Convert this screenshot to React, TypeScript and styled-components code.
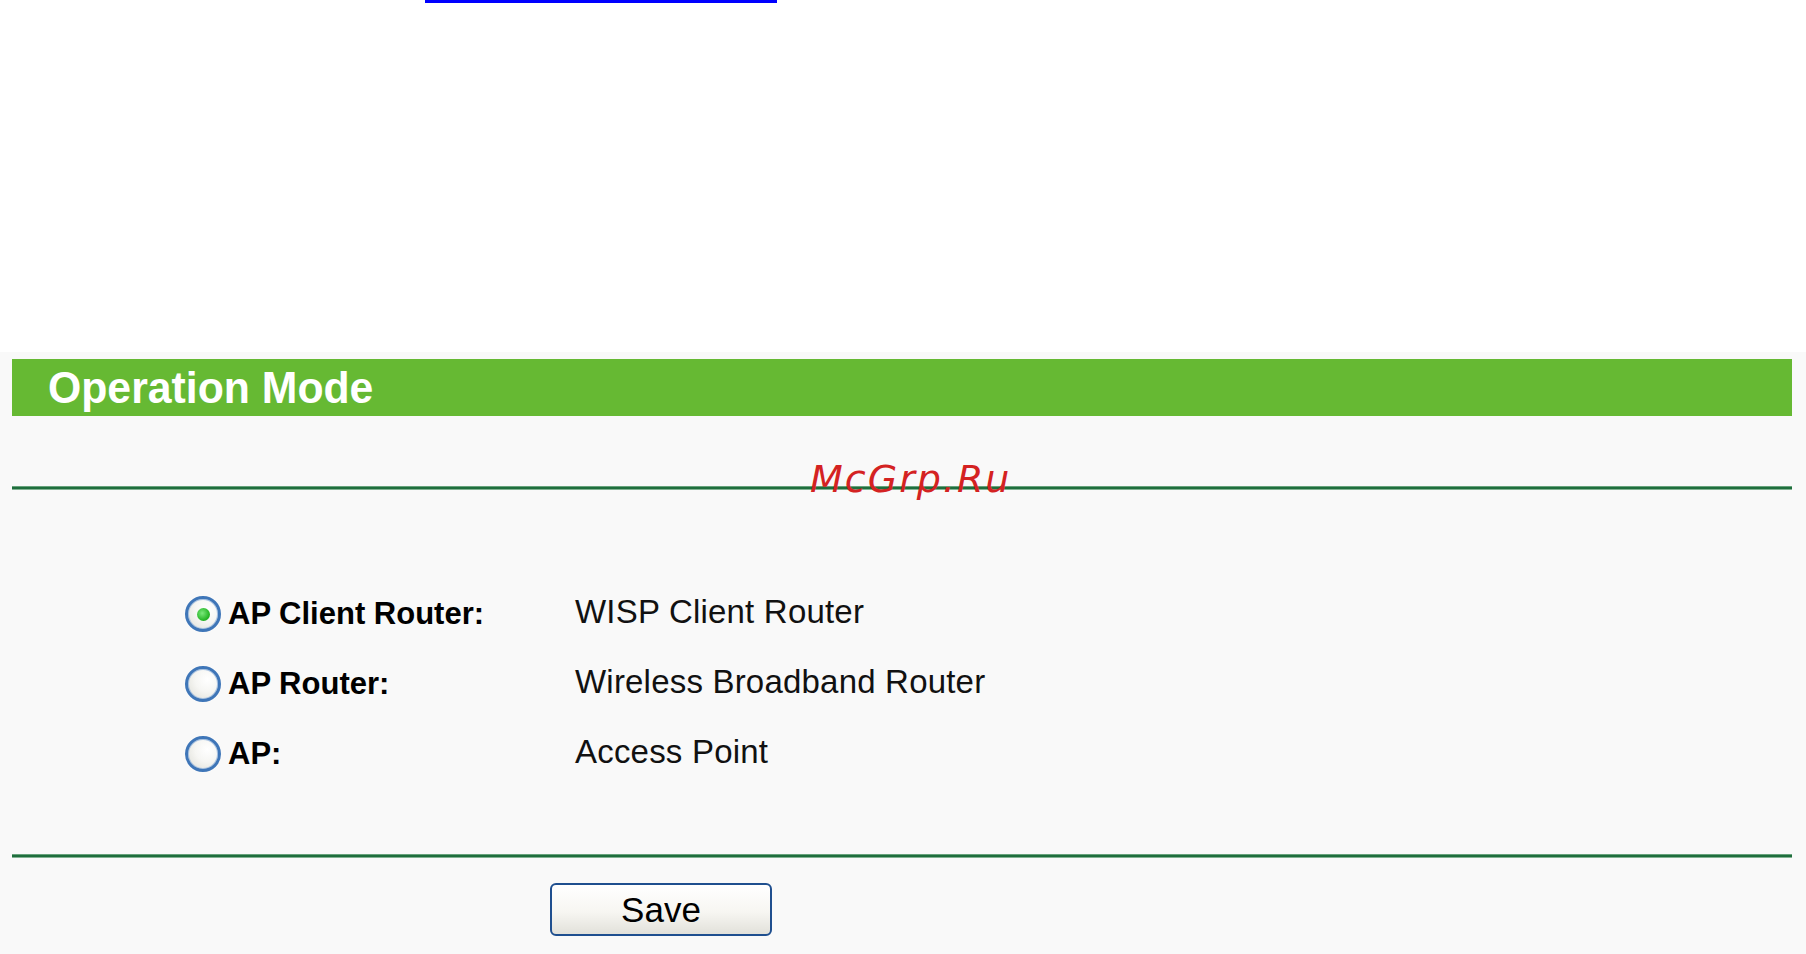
import styled, { createGlobalStyle } from 'styled-components'

const GlobalStyle = createGlobalStyle`
  html, body {
    margin: 0;
    padding: 0;
    background: #ffffff;
  }
  body {
    font-family: "Liberation Sans", Arial, sans-serif;
  }
`

const Page = styled.div`
  width: 1806px;
  height: 954px;
  overflow: hidden;
  display: flex;
  flex-direction: column;
`

const TopArea = styled.div`
  height: 352px;
  background: #ffffff;
`

const LinkUnderline = styled.div`
  margin-left: 425px;
  width: 352px;
  height: 3px;
  background: #0000ff;
`

const Panel = styled.div`
  position: relative;
  flex: 1;
  background: #f9f9f9;
  padding: 7px 14px 0 12px;
`

const TitleBar = styled.div`
  height: 57px;
  line-height: 57px;
  background: #66b933;
  color: #ffffff;
  padding-left: 36px;
  font-family: "Liberation Sans", Arial, sans-serif;
  font-weight: bold;
  font-size: 45px;
`

// the reference face is a touch narrower than Liberation Sans Bold
const TitleText = styled.span`
  display: inline-block;
  transform: scaleX(0.95);
  transform-origin: left center;
`

interface DividerProps {
  top: number;
}

const Divider = styled.div<DividerProps>`
  margin-top: ${(props) => props.top}px;
  height: 4px;
  background: linear-gradient(#8fbf9e 0%, #1f6e3d 35%, #1f6e3d 65%, #b9d8c2 100%);
`

const Options = styled.div`
  padding: 87px 0 67px 173px;
  display: flex;
  flex-direction: column;
`

const OptionRow = styled.label`
  height: 70px;
  display: flex;
  align-items: center;
  cursor: pointer;
`

interface RadioProps {
  checked: boolean;
}

const Radio = styled.span<RadioProps>`
  width: 36px;
  height: 36px;
  box-sizing: border-box;
  border-radius: 50%;
  border: 3px solid #3f76b8;
  box-shadow: inset 0 0 0 1px #a9c3e2;
  background: radial-gradient(circle at 65% 35%, #ffffff 0%, #f6f6f3 45%, #dcdcd4 100%);
  display: flex;
  align-items: center;
  justify-content: center;
  margin-top: 4px;

  &::after {
    content: '';
    display: ${(props) => (props.checked ? 'block' : 'none')};
    width: 13px;
    height: 13px;
    border-radius: 50%;
    background: radial-gradient(circle at 40% 40%, #7be87b 0%, #25b525 65%, #1a8e1a 100%);
  }
`

const Label = styled.span`
  width: 347px;
  margin-left: 7px;
  margin-top: 4px;
  font-size: 31px;
  font-weight: bold;
  color: #000000;
`

const Description = styled.span`
  font-size: 33px;
  letter-spacing: 0.2px;
  color: #111111;
`

const ButtonRow = styled.div`
  padding: 25px 0 0 538px;
`

const SaveButton = styled.button`
  width: 222px;
  height: 53px;
  border: 2px solid #1f4f8f;
  border-radius: 6px;
  background: linear-gradient(#ffffff 0%, #f7f6f2 55%, #e2e1da 100%);
  font-family: "Liberation Sans", Arial, sans-serif;
  font-size: 35px;
  color: #000000;
  padding: 0;
  cursor: pointer;
`

const Watermark = styled.span`
  position: absolute;
  top: 108px;
  left: 810px;
  font-family: "DejaVu Sans", sans-serif;
  font-style: oblique;
  font-size: 38px;
  line-height: 38px;
  letter-spacing: 2px;
  color: #d42222;
`

const modes = [
  { label: 'AP Client Router:', description: 'WISP Client Router', checked: true },
  { label: 'AP Router:', description: 'Wireless Broadband Router', checked: false },
  { label: 'AP:', description: 'Access Point', checked: false },
]

export default function App() {
  return (
    <Page>
      <GlobalStyle />
      <TopArea>
        <LinkUnderline />
      </TopArea>
      <Panel>
        <TitleBar>
          <TitleText>Operation Mode</TitleText>
        </TitleBar>
        <Divider top={70} />
        <Options>
          {modes.map((mode, index) => (
            <OptionRow key={index}>
              <Radio checked={mode.checked} />
              <Label>{mode.label}</Label>
              <Description>{mode.description}</Description>
            </OptionRow>
          ))}
        </Options>
        <Divider top={0} />
        <ButtonRow>
          <SaveButton>Save</SaveButton>
        </ButtonRow>
        <Watermark>McGrp.Ru</Watermark>
      </Panel>
    </Page>
  )
}
